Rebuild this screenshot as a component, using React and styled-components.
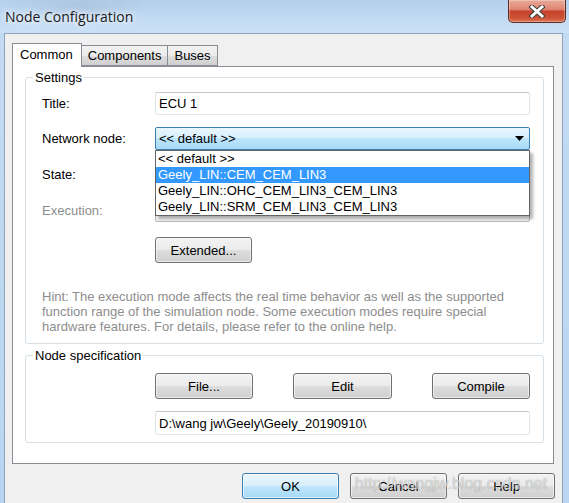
import React from "react";
import styled, { createGlobalStyle } from "styled-components";

const GlobalStyle = createGlobalStyle`
  html, body { margin: 0; padding: 0; }
  body {
    background: #ffffff;
    font-family: "Liberation Sans", Arial, sans-serif;
    font-size: 13px;
    color: #000;
  }
  * { box-sizing: border-box; }
`;

const Window = styled.div`
  position: relative;
  width: 569px;
  height: 503px;
  overflow: hidden;
  display: flex;
  flex-direction: column;
  background: linear-gradient(180deg, #b5d1ee 0%, #c3dbf3 40px, #b9d5f1 100%);
`;

const TitleBar = styled.header`
  flex: none;
  height: 33px;
  display: flex;
  align-items: flex-start;
  justify-content: space-between;
  padding: 0 3px 0 5px;
  background:
    radial-gradient(ellipse 70px 14px at 80px 6px, rgba(150, 170, 195, 0.35), transparent),
    linear-gradient(180deg, #b4d0ec 0%, #c2daf3 55%, #cae0f6 100%);
`;

const Caption = styled.h1`
  margin: 0;
  padding-top: 7px;
  font-family: "Open Sans", "Noto Sans", sans-serif;
  font-size: 14px;
  font-weight: 400;
  line-height: 20px;
  color: #1a1a1a;
  text-shadow: 0 0 6px #ffffff, 0 0 10px rgba(255, 255, 255, 0.8);
`;

const CloseButton = styled.button`
  width: 58px;
  height: 23px;
  margin: 0;
  padding: 0;
  border: 1px solid #5e2a20;
  border-top: none;
  border-radius: 0 0 5px 5px;
  background: linear-gradient(180deg, #eaa999 0%, #de8672 42%, #c7432c 52%, #cc5034 80%, #db7558 100%);
  box-shadow: inset 0 0 0 1px rgba(255, 255, 255, 0.3);
  display: flex;
  align-items: center;
  justify-content: center;
`;

const Client = styled.div`
  flex: 1;
  margin: 0 6px 0 4px;
  background: #f0f0f0;
  border: 1px solid #8fa2b7;
  border-bottom: none;
  padding: 9px 8px 0 7px;
  display: flex;
  flex-direction: column;
`;

const TabStrip = styled.div`
  display: flex;
  align-items: flex-end;
  height: 23px;
`;

const Tab = styled.div`
  position: relative;
  z-index: ${(p) => (p.$active ? 2 : 0)};
  height: ${(p) => (p.$active ? 24 : 21)}px;
  margin-bottom: ${(p) => (p.$active ? -1 : 0)}px;
  margin-left: ${(p) => (p.$active ? 0 : -1)}px;
  padding: ${(p) => (p.$active ? "3px 8px 0 7px" : "2px 6px 0 6px")};
  border: 1px solid #898c95;
  border-bottom: ${(p) => (p.$active ? "none" : "1px solid #898c95")};
  background: ${(p) =>
    p.$active ? "#ffffff" : "linear-gradient(180deg, #f2f2f2 0%, #ebebeb 50%, #dddddd 55%, #cfcfcf 100%)"};
  line-height: 15px;
  white-space: nowrap;
`;

const Panel = styled.div`
  position: relative;
  z-index: 1;
  height: 398px;
  background: #ffffff;
  border: 1px solid #898c95;
  padding: 3px 9px 0 12px;
  display: flex;
  flex-direction: column;
`;

const Group = styled.fieldset`
  margin: ${(p) => p.$gapTop || 0}px 0 0 0;
  padding: 0;
  min-width: 0;
  border: 1px solid #d5dfe5;
  border-radius: 3px;
`;

const GroupTitle = styled.legend`
  margin-left: 7px;
  padding: 0 2px;
  line-height: 15px;
`;

const GroupBody = styled.div`
  padding: ${(p) => p.$pad};
`;

const FieldGrid = styled.div`
  display: grid;
  grid-template-columns: 113px 1fr;
  row-gap: 12px;
  align-items: center;
`;

const FieldLabel = styled.label`
  line-height: 15px;
  color: ${(p) => (p.$disabled ? "#8d8d8d" : "#000000")};
`;

const TextBox = styled.div`
  height: ${(p) => p.$h || 23}px;
  border: 1px solid;
  border-color: #c5c9cf #dfe2e7 #e3e7ec #dfe2e7;
  border-radius: 2px;
  background: #ffffff;
  padding: 0 3px;
  display: flex;
  align-items: center;
  white-space: nowrap;
`;

const ComboWrap = styled.div`
  position: relative;
`;

const ComboHot = styled.div`
  height: 23px;
  border: 1px solid #3c7fb1;
  border-radius: 2px;
  padding: 0 5px 0 3px;
  display: flex;
  align-items: center;
  justify-content: space-between;
  background: linear-gradient(180deg, #eaf6fd 0%, #d9f0fc 45%, #bee6fd 50%, #a7d9f5 100%);
`;

const ComboOff = styled.div`
  height: 24px;
  border: 1px solid #b6b9bd;
  border-radius: 2px;
  background: #f4f4f4;
`;

const DropList = styled.ul`
  position: absolute;
  z-index: 5;
  top: 100%;
  left: 0;
  right: 0;
  margin: 0;
  padding: 0;
  list-style: none;
  background: #ffffff;
  border: 1px solid #646464;
  box-shadow: 3px 3px 3px rgba(0, 0, 0, 0.3);
`;

const DropItem = styled.li`
  height: 16px;
  line-height: 16px;
  padding-left: 2px;
  white-space: nowrap;
  background: ${(p) => (p.$selected ? "#3399ff" : "transparent")};
  color: ${(p) => (p.$selected ? "#ffffff" : "#000000")};
`;

const PushButton = styled.button`
  width: ${(p) => p.$w || 97}px;
  height: 26px;
  margin: 0;
  padding: 0;
  font-family: inherit;
  font-size: 13px;
  color: #000;
  border: 1px solid ${(p) => (p.$default ? "#3c7fb1" : "#707070")};
  border-radius: 3px;
  box-shadow: inset 0 0 0 1px ${(p) => (p.$default ? "rgba(255,255,255,0.6)" : "rgba(255,255,255,0.55)")};
  background: ${(p) =>
    p.$default
      ? "linear-gradient(180deg, #eaf6fd 0%, #d9f0fc 48%, #bee6fd 52%, #a7d9f5 100%)"
      : "linear-gradient(180deg, #f2f2f2 0%, #ebebeb 48%, #dddddd 52%, #cfcfcf 100%)"};
`;

const ControlCell = styled.div`
  grid-column: 2;
  margin-top: ${(p) => p.$mt || 0}px;
`;

const Hint = styled.p`
  margin: 26px 0 0 0;
  line-height: 15px;
  color: #8d8d8d;
  white-space: nowrap;
`;

const SpecButtons = styled.div`
  display: flex;
  justify-content: space-between;
`;

const DialogButtons = styled.div`
  display: flex;
  justify-content: flex-end;
  gap: 11px;
  margin: 9px -1px 0 0;
`;

const Watermark = styled.div`
  position: absolute;
  left: 355px;
  top: 475px;
  font-size: 16px;
  line-height: 18px;
  white-space: nowrap;
  color: rgba(255, 255, 255, 0.6);
  text-shadow: 0 0 1px rgba(70, 70, 70, 0.55);
  pointer-events: none;
`;

function CloseGlyph() {
  const d = "M3 2 L13 11 M13 2 L3 11";
  return (
    <svg width="16" height="13" viewBox="0 0 16 13">
      <path d={d} stroke="#3d3d3d" strokeWidth="5" strokeLinecap="square" fill="none" />
      <path d={d} stroke="#ffffff" strokeWidth="3" strokeLinecap="square" fill="none" />
    </svg>
  );
}

function Arrow() {
  return (
    <svg width="9" height="5" viewBox="0 0 9 5">
      <path d="M0 0 H9 L4.5 5 Z" fill="#000" />
    </svg>
  );
}

const networkNodes = [
  "<< default >>",
  "Geely_LIN::CEM_CEM_LIN3",
  "Geely_LIN::OHC_CEM_LIN3_CEM_LIN3",
  "Geely_LIN::SRM_CEM_LIN3_CEM_LIN3",
];

export default function App() {
  return (
    <>
      <GlobalStyle />
      <Window>
        <TitleBar>
          <Caption>Node Configuration</Caption>
          <CloseButton aria-label="Close">
            <CloseGlyph />
          </CloseButton>
        </TitleBar>
        <Client>
          <TabStrip>
            <Tab $active>Common</Tab>
            <Tab>Components</Tab>
            <Tab>Buses</Tab>
          </TabStrip>
          <Panel>
            <Group>
              <GroupTitle>Settings</GroupTitle>
              <GroupBody $pad="7px 13px 9px 16px">
                <FieldGrid>
                  <FieldLabel>Title:</FieldLabel>
                  <TextBox>ECU 1</TextBox>

                  <FieldLabel>Network node:</FieldLabel>
                  <ComboWrap>
                    <ComboHot>
                      <span>&lt;&lt; default &gt;&gt;</span>
                      <Arrow />
                    </ComboHot>
                    <DropList>
                      {networkNodes.map((n, i) => (
                        <DropItem key={n} $selected={i === 1}>
                          {n}
                        </DropItem>
                      ))}
                    </DropList>
                  </ComboWrap>

                  <FieldLabel>State:</FieldLabel>
                  <ComboOff />

                  <FieldLabel $disabled>Execution:</FieldLabel>
                  <ComboOff />

                  <ControlCell $mt={3}>
                    <PushButton>Extended...</PushButton>
                  </ControlCell>
                </FieldGrid>
                <Hint>
                  Hint: The execution mode affects the real time behavior as well as the supported
                  <br />
                  function range of the simulation node. Some execution modes require special
                  <br />
                  hardware features. For details, please refer to the online help.
                </Hint>
              </GroupBody>
            </Group>

            <Group $gapTop={4}>
              <GroupTitle>Node specification</GroupTitle>
              <GroupBody $pad="10px 13px 7px 16px">
                <FieldGrid>
                  <ControlCell>
                    <SpecButtons>
                      <PushButton $w={98}>File...</PushButton>
                      <PushButton $w={99}>Edit</PushButton>
                      <PushButton $w={98}>Compile</PushButton>
                    </SpecButtons>
                  </ControlCell>
                  <ControlCell>
                    <TextBox $h={24}>{"D:\\wang jw\\Geely\\Geely_20190910\\"}</TextBox>
                  </ControlCell>
                </FieldGrid>
              </GroupBody>
            </Group>
          </Panel>
          <DialogButtons>
            <PushButton $default>OK</PushButton>
            <PushButton>Cancel</PushButton>
            <PushButton>Help</PushButton>
          </DialogButtons>
        </Client>
        <Watermark>http://wangjw.blog.csdn.net</Watermark>
      </Window>
    </>
  );
}
